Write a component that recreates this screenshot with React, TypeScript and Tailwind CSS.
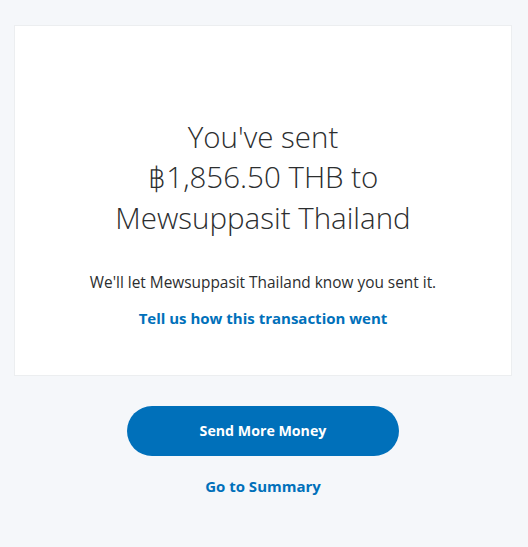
import React from 'react';

const font = { fontFamily: '"Open Sans", "Noto Sans", sans-serif' };

const App: React.FC = () => {
  return (
    <div className="min-h-[547px] bg-[#f5f7fa] pl-[14px] pr-[16px] pt-[25px] pb-10" style={font}>
      {/* Confirmation card */}
      <div className="bg-white border border-[#eceef0] h-[351px] flex flex-col items-center pt-[91px]">
        <h1 className="text-[29.5px] leading-[40px] font-light text-[#2c2e2f] text-center">
          You've sent
          <br />
          <span className="font-extralight" style={{ fontFamily: '"DejaVu Sans ExtraLight", "DejaVu Sans", sans-serif' }}>
            ฿
          </span>
          1,856.50 THB to
          <br />
          Mewsuppasit Thailand
        </h1>
        <p className="mt-[33px] text-[15.4px] text-[#2c2e2f] text-center">
          We'll let Mewsuppasit Thailand know you sent it.
        </p>
        <a href="#" className="mt-[13px] text-[15px] font-bold text-[#0070ba] text-center">
          Tell us how this transaction went
        </a>
      </div>

      {/* Actions */}
      <div className="flex flex-col items-center">
        <button
          type="button"
          className="mt-[30px] w-[272px] h-[50px] rounded-full bg-[#0070ba] text-white text-[14.2px] font-bold"
        >
          Send More Money
        </button>
        <a href="#" className="mt-[19px] text-[15px] font-bold text-[#0070ba]">
          Go to Summary
        </a>
      </div>
    </div>
  );
};

export default App;
